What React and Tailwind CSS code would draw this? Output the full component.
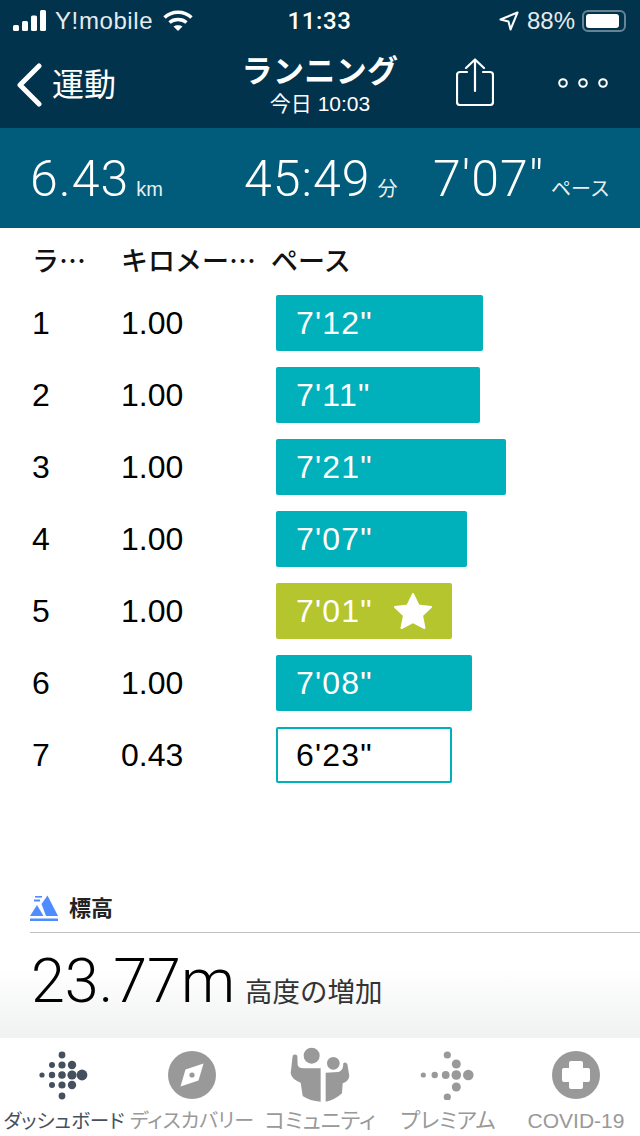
const jp = "font-['Liberation_Sans','Noto_Sans_CJK_JP',sans-serif]";

const laps = [
  { lap: 1, km: "1.00", pace: `7'12"`, width: "w-[207px]" },
  { lap: 2, km: "1.00", pace: `7'11"`, width: "w-[204px]" },
  { lap: 3, km: "1.00", pace: `7'21"`, width: "w-[230px]" },
  { lap: 4, km: "1.00", pace: `7'07"`, width: "w-[191px]" },
  { lap: 5, km: "1.00", pace: `7'01"`, width: "w-[176px]", best: true },
  { lap: 6, km: "1.00", pace: `7'08"`, width: "w-[196px]" },
  { lap: 7, km: "0.43", pace: `6'23"`, width: "w-[176px]", partial: true },
];

const Dots = ({ dots, fill }) => (
  <svg width="64" height="49" viewBox="0 0 64 49">
    {dots.map(([x, y, r]) => (
      <circle key={`${x}-${y}`} cx={x} cy={y} r={r} fill={fill} />
    ))}
  </svg>
);

const dashDots = [
  [30, 4, 3.4], [20, 14, 3], [30, 14, 3.6], [40, 14, 4.2],
  [10, 24, 2.6], [20, 24, 3.2], [30, 24, 3.8], [40, 24, 4.6], [50, 24, 5.4],
  [20, 34, 3], [30, 34, 3.6], [40, 34, 4.2], [30, 45, 3.4],
];
const premiumDots = [
  [31.3, 4, 3.6], [40.3, 13, 4.5], [7.3, 24, 2.6], [18.7, 24, 3.2], [29.7, 24, 3.9],
  [40.3, 24, 4.8], [52.3, 24, 5.3], [40.3, 36, 4.5], [31.3, 46, 3.6],
];

const tabs = [
  {
    label: "ダッシュボード",
    active: true,
    size: "text-[19.5px]",
    icon: <Dots dots={dashDots} fill="#45505f" />,
  },
  {
    label: "ディスカバリー",
    size: "text-[20px]",
    icon: (
      <svg width="48" height="48" viewBox="0 0 48 48">
        <circle cx="24" cy="24" r="24" fill="#999" />
        <path d="M35.500 12.500 L17.500 18.500 L12.500 35.500 L30.500 29.500 Z" fill="#fff" />
        <circle cx="24" cy="24" r="2.600" fill="#999" />
      </svg>
    ),
  },
  {
    label: "コミュニティ",
    size: "text-[21.5px]",
    icon: (
      <svg width="80" height="70" viewBox="0 0 240 210" fill="#999">
        <circle cx="95" cy="47" r="24" />
        <circle cx="160" cy="70" r="19" />
        <path d="M38 47 Q45 40 52 47 L53 75 Q56 85 70 85 L122 85 L122 185 Q90 183 68 168 L62 128 Q35 118 32 100 Z" />
        <path d="M137 185 L137 98 L175 96 Q187 92 189 80 L190 70 Q196 64 202 72 L208 108 Q205 125 188 130 L186 160 Q165 180 137 185 Z" />
      </svg>
    ),
  },
  {
    label: "プレミアム",
    size: "text-[21.5px]",
    icon: <Dots dots={premiumDots} fill="#999" />,
  },
  {
    label: "COVID-19",
    size: "text-[21px]",
    icon: (
      <svg width="48" height="48" viewBox="0 0 48 48">
        <circle cx="24" cy="24" r="24" fill="#999" />
        <path d="M19 10 H29 A2 2 0 0 1 31 12 V17 H36 A2 2 0 0 1 38 19 V29 A2 2 0 0 1 36 31 H31 V36 A2 2 0 0 1 29 38 H19 A2 2 0 0 1 17 36 V31 H12 A2 2 0 0 1 10 29 V19 A2 2 0 0 1 12 17 H17 V12 A2 2 0 0 1 19 10 Z" fill="#fff" />
      </svg>
    ),
  },
];

const StatusBar = () => (
  <div className="flex h-10 items-center justify-between pl-[13px] pr-[14px] pt-0.5 text-[24px] text-white">
    <div className="flex w-[210px] items-center">
      <svg width="34" height="22" viewBox="0 0 34 22" fill="#fff">
        <rect x="0" y="15" width="6" height="6" rx="1.500" />
        <rect x="9" y="11" width="6" height="10" rx="1.500" />
        <rect x="18" y="5.500" width="6" height="15.500" rx="1.500" />
        <rect x="27" y="0" width="6" height="21" rx="1.500" />
      </svg>
      <span className="ml-2 tracking-[0.6px] opacity-90">Y!mobile</span>
      <svg className="ml-[10px]" width="30" height="22" viewBox="0 0 30 22" fill="none" stroke="#fff" strokeWidth="3.400">
        <path d="M1.500 7.500 C9 0.500 21 0.500 28.500 7.500" />
        <path d="M6.500 12.500 C11 8.500 19 8.500 23.500 12.500" />
        <path d="M15 21 L10.500 16.500 C13 14.700 17 14.700 19.500 16.500 Z" fill="#fff" stroke="none" />
      </svg>
    </div>
    <span className="font-['Roboto'] font-medium tracking-[0.6px]">11:33</span>
    <div className="flex w-[210px] items-center justify-end">
      <svg width="20" height="20" viewBox="0 0 20 20" fill="none" stroke="#fff" strokeWidth="2" strokeLinejoin="round">
        <path d="M18.500 1.500 L1.500 8.500 L9.500 10.500 L11.500 18.500 Z" />
      </svg>
      <span className="ml-2 opacity-90">88%</span>
      <div className="ml-[7px] flex h-[22px] w-[44px] items-center rounded-[6px] border-2 border-white/40 p-[2px]">
        <div className="h-full w-[33px] rounded-[3px] bg-white" />
      </div>
    </div>
  </div>
);

const NavBar = () => (
  <div className="flex h-[88px] items-start text-white">
    <div className="flex w-[210px] items-center pl-[16px] pt-[23px]">
      <svg width="26" height="44" viewBox="0 0 26 44" fill="none" stroke="#fff" strokeWidth="5" strokeLinecap="round" strokeLinejoin="round">
        <path d="M23 3 L4 22 L23 41" />
      </svg>
      <span className="ml-[10px] text-[32px] leading-none">運動</span>
    </div>
    <div className="flex w-[220px] flex-col items-center pt-[12px]">
      <span className="text-[31px] font-bold leading-[40px] tracking-[0.4px]">ランニング</span>
      <span className="text-[21px] leading-[24px]">今日 10:03</span>
    </div>
    <div className="flex flex-1 items-center pl-[26px] pt-[18px]">
      <svg width="38" height="48" viewBox="0 0 38 48" fill="none" stroke="#fff" strokeWidth="2.200" strokeLinecap="round" strokeLinejoin="round">
        <path d="M19 33 V2 M10 10 L19 1.500 L28 10" />
        <path d="M11 14 H4 A3 3 0 0 0 1 17 V44 A3 3 0 0 0 4 47 H34 A3 3 0 0 0 37 44 V17 A3 3 0 0 0 34 14 H27" />
      </svg>
      <svg className="ml-[63px] mt-[2px]" width="52" height="10" viewBox="0 0 52 10" fill="none" stroke="#fff" strokeWidth="2">
        <circle cx="6" cy="5" r="3.800" />
        <circle cx="26" cy="5" r="3.800" />
        <circle cx="46" cy="5" r="3.800" />
      </svg>
    </div>
  </div>
);

const Stat = ({ value, unit, className }) => (
  <div className={`flex items-baseline ${className}`}>
    <span className="font-['Roboto'] text-[50px] font-light leading-none tracking-[1px]">{value}</span>
    <span className="ml-[7px] text-[20px] leading-none opacity-90">{unit}</span>
  </div>
);

const StatsBand = () => (
  <div className="flex h-[100px] items-center bg-[#005c7a] pt-[2px] text-white">
    <Stat value="6.43" unit="km" className="ml-[30px] w-[214px]" />
    <Stat value="45:49" unit="分" className="w-[189px]" />
    <Stat value={`7'07"`} unit="ペース" />
  </div>
);

const LapRow = ({ lap, km, pace, width, best, partial }) => {
  let bar = "bg-[#00b0ba] text-white";
  if (best) bar = "bg-[#b5c52e] text-white";
  if (partial) bar = "border-2 border-[#00b0ba] bg-white text-black";
  return (
    <div className="flex h-14 items-center text-[32px] text-black">
      <span className="w-[89px]">{lap}</span>
      <span className="w-[155px]">{km}</span>
      <div className={`flex h-14 items-center rounded-[2px] ${partial ? "pl-[18px]" : "pl-[20px]"} ${width} ${bar}`}>
        <span className="tracking-[1.2px]">{pace}</span>
        {best && (
          <svg className="ml-[20px]" width="40" height="38" viewBox="0 0 40 38" fill="#fff" stroke="#fff" strokeWidth="2" strokeLinejoin="round">
            <path d="M20 2 L25.500 13.500 L38 15 L29 23.500 L31.500 36 L20 30 L8.500 36 L11 23.500 L2 15 L14.500 13.500 Z" />
          </svg>
        )}
      </div>
    </div>
  );
};

const Elevation = () => (
  <div className="absolute inset-x-0 bottom-0 h-[154px] bg-gradient-to-b from-white from-[55%] to-[#f0f1f1] pl-[30px]">
    <div className="flex h-[49px] items-center border-b border-[#c0c0c0]">
      <svg width="28" height="27" viewBox="0 0 28 27" fill="#4f8cff">
        <path d="M0 21 L7 10 L13.500 21 Z" />
        <path d="M11.500 9 L17.500 0.500 L28 21 L16 21 Z" />
        <rect x="5" y="1" width="7" height="1.600" />
        <rect x="4" y="4.500" width="6" height="2" />
        <rect x="0" y="23.500" width="28" height="2.500" />
      </svg>
      <span className="ml-[11px] text-[22px] font-bold text-[#222]">標高</span>
    </div>
    <div className="flex items-baseline pl-[1px] pt-[13px]">
      <span className="font-['Roboto'] text-[61px] font-light leading-[70px] text-black">23.77m</span>
      <span className="ml-[10px] text-[27.5px] text-[#333]">高度の増加</span>
    </div>
  </div>
);

const TabBar = () => (
  <div className="flex h-[98px] bg-white">
    {tabs.map((tab) => (
      <div key={tab.label} className="flex w-[128px] flex-col items-center">
        <div className="flex h-[71px] items-center justify-center pb-[3px] pt-[6px]">{tab.icon}</div>
        <span className={`whitespace-nowrap leading-[24px] [font-feature-settings:'palt'] ${tab.size} ${tab.active ? "text-[#45505f]" : "text-[#999]"}`}>
          {tab.label}
        </span>
      </div>
    ))}
  </div>
);

export default function App() {
  return (
    <div className={`flex h-[1136px] w-[640px] flex-col overflow-hidden bg-white ${jp}`}>
      <div className="h-[128px] bg-[#02334d]">
        <StatusBar />
        <NavBar />
      </div>
      <StatsBand />
      <main className="relative flex-1 bg-white">
        <div className="flex flex-col gap-4 px-8">
          <div className="-mb-1 flex h-[55px] items-end pb-[3px] font-['Noto_Sans_CJK_JP'] text-[27px] font-medium leading-[40px] text-[#111]">
            <span className="w-[89px]">ラ…</span>
            <span className="w-[150px]">キロメー…</span>
            <span>ペース</span>
          </div>
          {laps.map((row) => (
            <LapRow key={row.lap} {...row} />
          ))}
        </div>
        <Elevation />
      </main>
      <TabBar />
    </div>
  );
}
